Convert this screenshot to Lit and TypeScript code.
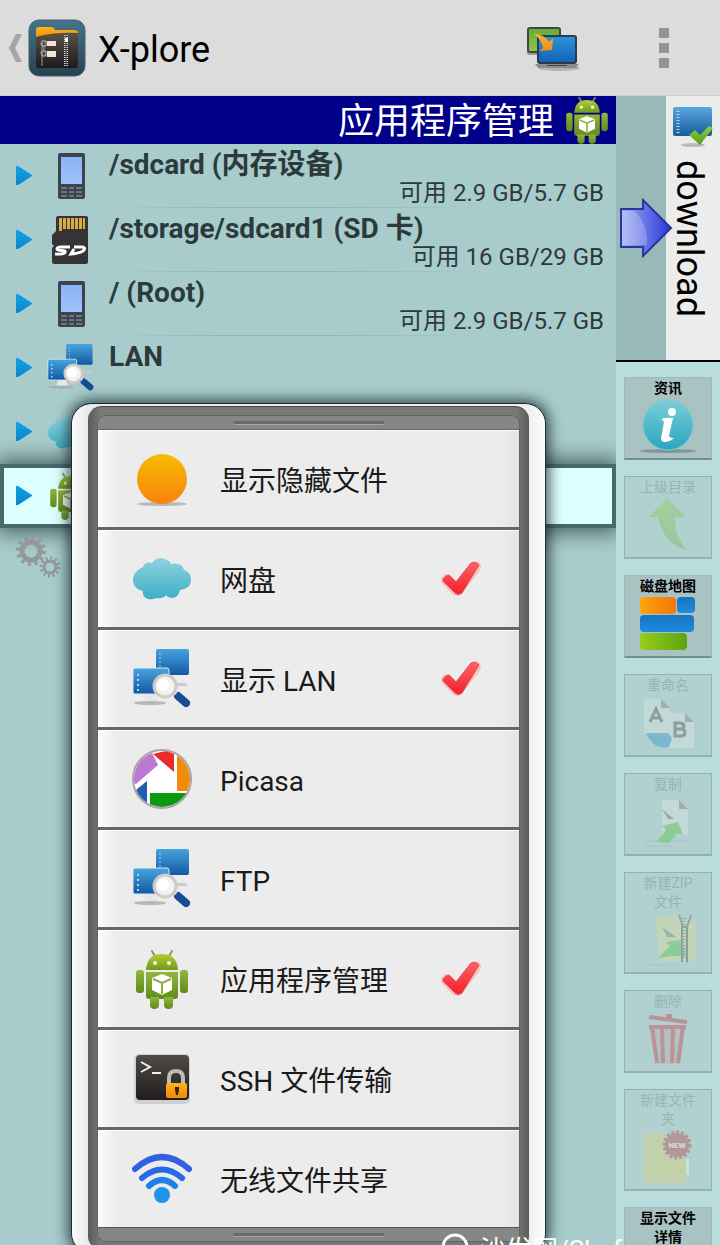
import { LitElement, html, svg, css, nothing } from "lit";
import { customElement, property, state } from "lit/decorators.js";
import { classMap } from "lit/directives/class-map.js";

const grad = (id: string, a: string, b: string, across = false) => svg`
  <linearGradient id=${id} x1="0" y1="0" x2=${across ? 1 : 0} y2=${across ? 0 : 1}>
    <stop offset="0" stop-color=${a}></stop><stop offset="1" stop-color=${b}></stop>
  </linearGradient>`;

const page = (x: number, y: number) => svg`
  <path transform="translate(${x} ${y})" d="M0 0h17l9 9v26H0z" fill="#e4e8ea"></path>
  <path transform="translate(${x} ${y})" d="M17 0v9h9z" fill="#777"></path>`;

const ICONS: Record<string, { box: string; art: unknown }> = {
  app: {
    box: "0 0 58 58",
    art: svg`<defs>${grad("bg", "#44758c", "#27414f")}${grad("fo", "#5b5048", "#1b1b1c")}${grad("or", "#ffb21c", "#f08c00")}</defs>
      <rect x="1" y="1" width="56" height="56" rx="10" fill="url(#bg)" stroke="#4b5f6c"></rect>
      <path d="M8 18v-7q0-3 3-3h12q3 0 4 3h19q4 0 4 3v6H8z" fill="url(#or)"></path>
      <path d="M8 18q18-5 42-4v32q0 3-3 3H11q-3 0-3-3z" fill="url(#fo)"></path>
      <path d="M14 22v25M12 25h6M12 34h6M16 22v14" stroke="#9a9a9a" stroke-width="1" fill="none"></path>
      <path d="M19 22h9v5h-9zM19 32h9v6h-9z" fill="#f3e3d3"></path>
      <path d="M14 22h4v5h-4zM14 32h4v5h-4z" fill="#4a4a4a" stroke="#bbb"></path>
      <path d="M38 16v31" stroke="#d5d5d5" stroke-width="4" stroke-dasharray="1 1"></path>
      <path d="M38 16v31" stroke="#3a3a3a" stroke-width="1"></path><path d="M37 19h3v4h-3z" fill="#fff"></path>`,
  },
  back: { box: "0 0 14 28", art: svg`<path d="M8 0h6L7 14l7 14H8L1 14z" fill="#a5a5a5"></path>` },
  switch: {
    box: "0 0 56 48",
    art: svg`<defs>${grad("g", "#5fae3c", "#9ac24a")}${grad("b", "#2a93dd", "#1462b4")}${grad("o", "#f9b233", "#f28a12")}</defs>
      <ellipse cx="34" cy="44" rx="21" ry="3" fill="#999" opacity=".6"></ellipse>
      <path d="M1 28h14v3H3z" fill="#9a9a9a"></path>
      <rect x="3" y="4" width="32" height="24" rx="2" fill="url(#g)" stroke="#3d473c" stroke-width="2"></rect>
      <rect x="13" y="12" width="38" height="27" rx="2" fill="url(#b)" stroke="#2e3a47" stroke-width="2"></rect>
      <path d="M10 40h44l-3 4H13z" fill="#8c8c8c"></path><path d="M22 41h20v1H22z" fill="#444"></path>
      <path d="M9 10q10 0 15 8l4-4-1 12-13 1 4-3q-1-8-9-14z" fill="url(#o)"></path>`,
  },
  android: {
    box: "0 0 60 60",
    art: svg`<defs>${grad("g", "#b4cf35", "#6f9a1e")}${grad("s", "#94b63a", "#5f8a1c")}</defs>
      <path d="M20 2l4 7M40 2l-4 7" stroke="#8a9a5a" stroke-width="2" stroke-linecap="round"></path>
      <path d="M14 21q1-16 16-16t16 16z" fill="url(#g)"></path>
      <circle cx="23" cy="14" r="2" fill="#f4f8dc"></circle><circle cx="37" cy="14" r="2" fill="#f4f8dc"></circle>
      <path d="M14 23h32v24q0 3-3 3H17q-3 0-3-3z" fill="url(#s)"></path>
      <rect x="4" y="21" width="8" height="23" rx="3" fill="url(#s)"></rect><rect x="48" y="21" width="8" height="23" rx="3" fill="url(#s)"></rect>
      <path d="M18 48h9v9q-1 3-4.500 3T18 57zM32 48h9v9q-1 3-4.500 3T32 57z" fill="url(#s)"></path>
      <path d="M30 25l10 4v12l-10 5-10-5V29z" fill="#fff"></path>
      <path d="M21 30l9 4 9-4M30 34v11" stroke="#8fae3a" stroke-width="2" fill="none"></path>`,
  },
  phone: {
    box: "0 0 48 48",
    art: svg`<defs>${grad("s", "#8db2f2", "#a2c3fa")}</defs>
      <rect x="11" y="1" width="27" height="46" rx="2" fill="#3b444c"></rect><rect x="14" y="5" width="21" height="27" fill="url(#s)"></rect>
      <path d="M14 35h6v2h-6zM22 35h5v2h-5zM29 35h6v2h-6zM14 39h6v2h-6zM22 39h5v2h-5zM29 39h6v2h-6zM14 43h6v2h-6zM22 43h5v2h-5zM29 43h6v2h-6z" fill="#6d757c"></path>`,
  },
  sd: {
    box: "0 0 48 48",
    art: svg`<path d="M11 0h28q2 0 2 2v44q0 2-2 2H7q-2 0-2-2V32l2-2-2-2V19l4-4V2q0-2 2-2z" fill="#343434"></path>
      <path d="M12 2h3v13h-3zM16 2h3v11h-3zM20 2h3v11h-3zM24 2h3v11h-3zM28 2h3v11h-3zM32 2h3v11h-3zM36 2h2v11h-2z" fill="#d9ab45"></path>
      <path d="M23 31H14q-4 0-4 2 0 1.500 5 1.500 4 0 3 2T8 38M27 31h7q5 0 3 3t-13 4l3-5" stroke="#fff" stroke-width="3" fill="none"></path>`,
  },
  lan: {
    box: "0 0 60 60",
    art: svg`<defs>${grad("b", "#48a4dd", "#1457a5")}</defs>
      <ellipse cx="18" cy="54" rx="16" ry="2" fill="#aaa" opacity=".8"></ellipse><path d="M14 45h10l2 7H12z" fill="#e4e6e8"></path>
      <path d="M36 34h16q6 1 2 3H38z" fill="#c9cccf"></path>
      <rect x="24" y="0" width="33" height="26" rx="2" fill="url(#b)"></rect><path d="M28 4v18" stroke="#9fd4ee" stroke-width="1" stroke-dasharray="2 2"></path>
      <rect x="1" y="19" width="36" height="26" rx="2" fill="url(#b)" stroke="#d7ecf5" stroke-width="1"></rect>
      <path d="M6 25v17" stroke="#a4d8f5" stroke-width="2" stroke-dasharray="2 3"></path>
      <path d="M46 47l8 7" stroke="#154b97" stroke-width="8" stroke-linecap="round"></path><path d="M40 41l4 4" stroke="#ddd" stroke-width="4"></path>
      <circle cx="33" cy="37" r="11" fill="#f2f2f2" stroke="#cfcac6" stroke-width="3"></circle><circle cx="31" cy="36" r="6" fill="#fff"></circle>`,
  },
  cloud: {
    box: "0 0 60 60",
    art: svg`<defs>${grad("c", "#8dd4de", "#3fadc6")}</defs>
      <path transform="translate(0 -2)" d="M11 20q2-6 9-4 6-8 15-3 3 1 4 4 11-2 13 6 8 3 7 11t-11 9q-1 7-8 8-4 0-6-3-3 4-10 3-3 2-8 1-6-2-5-8-9-2-10-10-1-9 10-14z" fill="url(#c)"></path>`,
  },
  gears: {
    box: "0 0 48 48",
    art: svg`<g fill="none" stroke="#949899"><circle cx="15" cy="15" r="9" stroke-width="5"></circle><circle cx="15" cy="15" r="13" stroke-width="4" stroke-dasharray="3 3.800"></circle>
      <circle cx="34" cy="31" r="6" stroke-width="3"></circle><circle cx="34" cy="31" r="9" stroke-width="3" stroke-dasharray="2 2.700"></circle></g>`,
  },
  sun: {
    box: "0 0 60 60",
    art: svg`<defs>${grad("o", "#f5bd00", "#f9820e")}</defs><ellipse cx="30" cy="55" rx="25" ry="2" fill="#aaa" opacity=".8"></ellipse><circle cx="30" cy="30" r="25" fill="url(#o)"></circle>`,
  },
  picasa: {
    box: "0 0 60 60",
    art: svg`<defs><clipPath id="k"><circle cx="30" cy="30" r="28"></circle></clipPath></defs>
      <circle cx="30" cy="30" r="29" fill="#fff" stroke="#a9a4a8" stroke-width="2"></circle>
      <g clip-path="url(#k)"><path d="M0 34V0h18l8 16-22 19z" fill="#bd78d2"></path><path d="M21 5L42 0v23z" fill="#ea2b2b"></path>
      <path d="M45 0h15v42H45z" fill="#f08b0c"></path><path d="M18 44h40v16H18z" fill="#0b990f"></path><path d="M15 32v22H0V44z" fill="#1e5fae"></path></g>`,
  },
  ssh: {
    box: "0 0 60 60",
    art: svg`<defs>${grad("k", "#4f4b48", "#201d1c")}${grad("o", "#fdb021", "#f28a05")}</defs>
      <rect x="2" y="5" width="56" height="50" rx="5" fill="#d0d0d3"></rect><rect x="4" y="6" width="53" height="45" rx="4" fill="url(#k)"></rect>
      <path d="M9 13l9 5-9 5M20 24h9" stroke="#eee" stroke-width="2" fill="none"></path>
      <path d="M37 36v-7q0-7 7-7t7 7v7" stroke="#bbb" stroke-width="4" fill="none"></path>
      <rect x="34" y="34" width="21" height="15" rx="2" fill="url(#o)"></rect><path d="M43 38h4v3l-1 5h-2l-1-5z" fill="#3d2503"></path>`,
  },
  wifi: {
    box: "0 0 60 60",
    art: svg`<g fill="none" stroke-width="6" stroke-linecap="round"><path d="M3 20Q30-4 57 20" stroke="#3161e2"></path><path d="M10 29Q30 12 50 29" stroke="#2869e6"></path><path d="M17 37Q30 25 43 37" stroke="#2080ea"></path></g>
      <circle cx="30" cy="46" r="8" fill="#1f92ea"></circle>`,
  },
  tick: {
    box: "0 0 44 40",
    art: svg`<defs>${grad("r", "#ff6464", "#f01f2c")}</defs>
      <path d="M8 21l10 10L36 8" fill="none" stroke="#f8a9a9" stroke-width="12" stroke-linejoin="round" stroke-linecap="round" opacity=".6"></path>
      <path d="M4 20q3-4 6-4l7 7L32 4q5-2 8 2L23 34q-4 3-7 0L4 22z" fill="url(#r)" stroke="#ee4a4f" stroke-width="1" stroke-linejoin="round"></path>`,
  },
  drive: {
    box: "0 0 44 44",
    art: svg`<defs>${grad("b", "#56a8de", "#1b5b9d")}${grad("g", "#8ed03c", "#4d9e1d")}</defs>
      <ellipse cx="22" cy="41" rx="12" ry="2" fill="#bbb"></ellipse><rect x="2" y="3" width="39" height="29" rx="2" fill="url(#b)"></rect>
      <path d="M7 7v23" stroke="#b5dcf5" stroke-width="3" stroke-dasharray="1 2"></path><path d="M18 31l6-5 5 5 9-9 4 2-13 17z" fill="url(#g)"></path>`,
  },
  arrow: {
    box: "0 0 54 60",
    art: svg`<defs>${grad("b", "#9fb0f4", "#2b34d8", true)}</defs><path d="M2 11h22V2l28 28-28 28V49H2z" fill="url(#b)" stroke="#28379f" stroke-width="2"></path>
      <path d="M3 13h12q14 12 13 34H3z" fill="#fff" opacity=".22"></path>`,
  },
  info: {
    box: "0 0 56 56",
    art: svg`<defs>${grad("c", "#79ced8", "#2ba5bd")}</defs><ellipse cx="28" cy="53" rx="28" ry="2" fill="#7a8a8a" opacity=".8"></ellipse>
      <circle cx="28" cy="27" r="25" fill="url(#c)" stroke="#7cc9d4"></circle><circle cx="32" cy="14" r="4" fill="#fff"></circle>
      <path d="M21 21q6-2 12-1l-4 18q1 2 5 2-4 4-10 4-3-1-3-4l3-16q-1-2-3-3z" fill="#fff"></path>`,
  },
  up: { box: "0 0 56 56", art: svg`<defs>${grad("g", "#8bd040", "#6fb050")}</defs><path d="M27 1l19 19H35q-1 20 12 33-24-6-29-33H9z" fill="url(#g)"></path>` },
  map: {
    box: "0 0 56 56",
    art: svg`<defs>${grad("o", "#fca60c", "#f2760a", true)}${grad("b", "#1673bf", "#1f8be0")}${grad("g", "#9acc1c", "#5ba510", true)}</defs>
      <rect x="0" y="1" width="36" height="17" rx="4" fill="url(#o)"></rect><rect x="37" y="1" width="18" height="16" rx="4" fill="url(#b)"></rect>
      <rect x="0" y="19" width="54" height="17" rx="4" fill="url(#b)"></rect><rect x="0" y="37" width="47" height="17" rx="4" fill="url(#g)"></rect>`,
  },
  rename: {
    box: "0 0 56 56",
    art: svg`${page(4, 4)}${page(28, 18)}<path d="M6 38h22l4 5-3 9q-16 3-23-14z" fill="#1e86dc"></path>
      <path d="M10 27l6-13 6 13M12 23h8M35 28v13h6q4 0 4-3.500T41 34h-6 5q4 0 4-3t-4-3z" fill="none" stroke="#444" stroke-width="3"></path>`,
  },
  copy: { box: "0 0 56 56", art: svg`${page(22, 6)}<path d="M4 52h30M4 47h46" stroke="#aaa"></path><path d="M22 15l12 10h-6z" fill="#666"></path><path d="M16 48l10-12-4-4 16-4 5 13-6-1-8 9z" fill="#4fc530"></path>` },
  zip: {
    box: "0 0 56 56",
    art: svg`<path d="M16 4h20l6 5h14v40H20z" fill="#e6dd92"></path><path d="M22 15l14 10h-9z" fill="#777"></path><path d="M18 46l12-12-4-4 16-2 4 16H32z" fill="#4fc530"></path>
      <path d="M42 14v36M47 14v36" stroke="#444" stroke-width="2"></path><path d="M44 6v42" stroke="#666" stroke-width="4" stroke-dasharray="1 2"></path><path d="M39 3l4 12h4l4-12" stroke="#555" stroke-width="2" fill="none"></path><path d="M4 53h34" stroke="#aaa"></path>`,
  },
  trash: {
    box: "0 0 56 56",
    art: svg`<path d="M9 6l38 5M26 5h6" stroke="#d02030" stroke-width="4"></path><path d="M9 16h36l-5 37H16z" fill="#b9a8a4"></path>
      <path d="M12 16l5 36M22 16l1 36M33 16l-1 36M43 16l-5 36M9 16h37" stroke="#d32233" stroke-width="4" fill="none"></path>`,
  },
  folder: {
    box: "0 0 56 56",
    art: svg`<path d="M4 4h20l4 4h18v46H8q-4 0-4-4z" fill="#e8d26a"></path><path d="M46 30h3v16h-3z" fill="#fff"></path>
      <circle cx="37" cy="16" r="12" fill="#c02a35"></circle><circle cx="37" cy="16" r="13" fill="none" stroke="#c02a35" stroke-width="3" stroke-dasharray="3 2"></circle>
      <text x="37" y="19" font-size="8" font-weight="700" text-anchor="middle" fill="#fff">NEW</text>`,
  },
  details: { box: "0 0 56 56", art: page(14, 8) },
  dots: { box: "0 0 12 42", art: svg`<path d="M1 1h10v10H1zM1 16h10v10H1zM1 31h10v10H1z" fill="#949494"></path>` },
  expand: { box: "0 0 17 20", art: svg`<defs>${grad("b", "#12a0e6", "#0b86cc")}</defs><path d="M0 0h2l14 9v1L2 19H0z" fill="url(#b)"></path>` },
  ring: { box: "0 0 30 30", art: svg`<circle cx="15" cy="15" r="12" fill="none" stroke="#fff" stroke-width="3"></circle>` },
};

@customElement("xp-icon")
class XpIcon extends LitElement {
  @property() name = "";
  static styles = css`
    :host { display: block; flex: none; }
    svg { display: block; width: 100%; height: 100%; font-family: Roboto, sans-serif; }
  `;
  render() {
    const icon = ICONS[this.name];
    return icon ? html`<svg viewBox=${icon.box} aria-hidden="true">${icon.art}</svg>` : nothing;
  }
}

interface Place { icon: string; name: string; free?: string; selected?: boolean; leaf?: boolean }
interface Option { icon: string; name: string; on?: boolean }
interface Tool { icon: string; name: string; off?: boolean }

const PLACES: Place[] = [
  { icon: "phone", name: "/sdcard (内存设备)", free: "可用 2.9 GB/5.7 GB" },
  { icon: "sd", name: "/storage/sdcard1 (SD 卡)", free: "可用 16 GB/29 GB" },
  { icon: "phone", name: "/ (Root)", free: "可用 2.9 GB/5.7 GB" },
  { icon: "lan", name: "LAN" },
  { icon: "cloud", name: "" },
  { icon: "android", name: "", selected: true },
  { icon: "gears", name: "", leaf: true },
];

const TOOLS: Tool[] = [
  { icon: "info", name: "资讯" },
  { icon: "up", name: "上级目录", off: true },
  { icon: "map", name: "磁盘地图" },
  { icon: "rename", name: "重命名", off: true },
  { icon: "copy", name: "复制", off: true },
  { icon: "zip", name: "新建ZIP文件", off: true },
  { icon: "trash", name: "删除", off: true },
  { icon: "folder", name: "新建文件夹", off: true },
  { icon: "details", name: "显示文件详情" },
];

@customElement("app-root")
class AppRoot extends LitElement {
  @state() options: Option[] = [
    { icon: "sun", name: "显示隐藏文件" },
    { icon: "cloud", name: "网盘", on: true },
    { icon: "lan", name: "显示 LAN", on: true },
    { icon: "picasa", name: "Picasa" },
    { icon: "lan", name: "FTP" },
    { icon: "android", name: "应用程序管理", on: true },
    { icon: "ssh", name: "SSH 文件传输" },
    { icon: "wifi", name: "无线文件共享" },
  ];

  static styles = css`
    :host {
      display: flex; flex-direction: column; position: relative; height: 100vh; overflow: hidden;
      background: #a8cccc; color: #000;
      font-family: Roboto, "Noto Sans CJK SC", sans-serif;
    }
    * { box-sizing: border-box; }
    button { font: inherit; color: inherit; border: 0; padding: 0; margin: 0; background: none; text-align: left; }
    h1, h2, ul { margin: 0; padding: 0; font-weight: 400; list-style: none; }

    .bar { display: flex; align-items: center; flex: none; height: 96px; padding: 0 50px 0 8px; background: #dcdcdc; border-bottom: 1px solid #d0d0d0; }
    .home { display: flex; align-items: center; gap: 6px; }
    .back { width: 14px; height: 28px; }
    .logo { width: 58px; height: 58px; }
    .bar h1 { flex: 1; padding: 4px 0 0 12px; font-size: 36px; line-height: 48px; }
    .switch { width: 56px; height: 48px; margin-right: 77px; }
    .dots { width: 12px; height: 42px; }

    .main { display: flex; flex: 1; min-height: 0; }
    .pane { flex: 1; min-width: 0; overflow: hidden; }
    .pane-title { display: flex; justify-content: flex-end; align-items: center; gap: 9px; height: 48px; padding-right: 5px; background: #000089; color: #fff; font-size: 36px; line-height: 48px; }
    .pane-title span { padding-top: 4px; }
    .pane-title xp-icon { width: 48px; height: 48px; }

    .row { position: relative; display: flex; align-items: center; gap: 14px; height: 64px; padding: 0 12px 0 16px; color: #2c3a3c; }
    .row.lined { background: linear-gradient(90deg, transparent 110px, #93b5b5 220px, #93b5b5 330px, transparent 480px) bottom / 100% 1px no-repeat; }
    .row.selected { background: #dcffff; border: 4px solid #47696a; padding-left: 12px; box-shadow: 0 0 20px 4px #405a5a; }
    .expand { width: 17px; height: 20px; }
    .expand xp-icon { width: 17px; height: 20px; }
    .place { width: 48px; height: 48px; }
    .text { flex: 1; align-self: flex-start; display: flex; flex-direction: column; padding-top: 5px; }
    .name { font-size: 28px; line-height: 32px; font-weight: 700; }
    .free { font-size: 24px; line-height: 24px; align-self: flex-end; }
    .gears { width: 48px; height: 48px; }

    .side { flex: none; width: 104px; display: flex; flex-direction: column; background: #b9dddd; }
    .other { display: flex; flex: none; height: 266px; background: #97b9b9; border-bottom: 2px solid #000; }
    .swap { position: relative; width: 50px; display: flex; align-items: center; padding-left: 3px; z-index: 1; }
    .swap xp-icon { width: 54px; height: 60px; }
    .tab { flex: 1; display: flex; flex-direction: column; align-items: center; gap: 12px; padding-top: 8px; background: #ececec; font-size: 36px; line-height: 44px; }
    .tab xp-icon { width: 44px; height: 44px; }
    .tab span { writing-mode: vertical-rl; padding-right: 8px; }
    .tools { display: flex; flex-direction: column; gap: 16px; padding: 15px 8px 0; }
    .tool { display: flex; flex-direction: column; align-items: center; flex: none; padding: 1px 12px 4px; background: #a9c2c2; border: 1px solid #a0b9b9; border-bottom: 2px solid #748f8f; font-size: 14px; line-height: 19px; font-weight: 700; text-align: center; }
    .tool xp-icon { width: 56px; height: 56px; }
    .tool:disabled { opacity: 1; background: #b0d1cf; border: 1px solid #94b0b0; border-bottom-width: 2px; color: #98b3b2; font-weight: 400; }
    .tool:disabled xp-icon { opacity: .35; }

    .menu { position: absolute; top: 404px; left: 10%; right: 24.300%; padding: 2px 16px 3px; background: linear-gradient(90deg, #fbfbfb, #e8e8e8 16px, #f0f0f0 calc(100% - 16px), #fdfdfd); border-radius: 20px; box-shadow: 0 0 0 1px #1d2b2d, 0 0 14px 4px rgba(10, 25, 30, .75); }
    .bezel { padding: 9px 10px; background: linear-gradient(90deg, #5a5a5a, #787878 12px, #787878 calc(100% - 12px), #5a5a5a); border-top: 1px solid #4d4848; border-radius: 14px; }
    .screen { border-radius: 8px; overflow: hidden; background: #808080; box-shadow: 0 0 0 1px #626262; }
    .slot { display: flex; align-items: center; justify-content: center; height: 13px; background: #868686; }
    .slot span { width: 152px; height: 4px; border-radius: 2px; background: #6a6a6a; border-bottom: 1px solid #a5a5a5; }
    .menu li { border-top: 3px solid #666; }
    .menu li:first-child { border-top-width: 1px; }
    .menu ul { border-bottom: 1px solid #555; }
    .option { display: flex; align-items: center; width: 100%; height: 97px; gap: 28px; padding: 0 36px 0 34px; background: linear-gradient(90deg, #fdfdfd, #ececec 18px, #ececec calc(100% - 18px), #e2e2e2); border-top: 1px solid #fff; color: #1a1a1a; font-size: 28px; line-height: 36px; }
    .option > xp-icon { width: 60px; height: 60px; }
    .option span { flex: 1; padding-top: 6px; }
    .option .tick { width: 44px; height: 40px; }

    .mark { position: absolute; bottom: 0; right: 26px; display: flex; align-items: flex-start; gap: 10px; height: 13px; overflow: hidden; color: #fff; font-size: 26px; line-height: 32px; }
    .mark xp-icon { width: 30px; height: 30px; }
    .mark span { padding-top: 2px; }
  `;

  private toggle(i: number) {
    this.options = this.options.map((o, n) => (n === i ? { ...o, on: !o.on } : o));
  }

  render() {
    return html`
      <header class="bar">
        <button class="home" aria-label="返回"><xp-icon class="back" name="back"></xp-icon><xp-icon class="logo" name="app"></xp-icon></button>
        <h1>X-plore</h1>
        <button aria-label="切换"><xp-icon class="switch" name="switch"></xp-icon></button>
        <button aria-label="更多"><xp-icon class="dots" name="dots"></xp-icon></button>
      </header>
      <div class="main">
        <section class="pane">
          <h2 class="pane-title"><span>应用程序管理</span><xp-icon name="android"></xp-icon></h2>
          <ul>${PLACES.map((p) => this.place(p))}</ul>
        </section>
        <aside class="side">
          <div class="other">
            <button class="swap" aria-label="切换窗格"><xp-icon name="arrow"></xp-icon></button>
            <div class="tab"><xp-icon name="drive"></xp-icon><span>download</span></div>
          </div>
          <div class="tools">
            ${TOOLS.map((t) => html`<button class="tool" ?disabled=${t.off}>${t.name}<xp-icon name=${t.icon}></xp-icon></button>`)}
          </div>
        </aside>
      </div>
      <div class="menu">
        <div class="bezel">
          <div class="screen">
            <div class="slot"><span></span></div>
            <ul role="menu">
              ${this.options.map((o, i) => html`<li role="none">
                <button class="option" role="menuitemcheckbox" aria-checked=${o.on ? "true" : "false"} @click=${() => this.toggle(i)}>
                  <xp-icon name=${o.icon}></xp-icon><span>${o.name}</span>${o.on ? html`<xp-icon class="tick" name="tick"></xp-icon>` : nothing}
                </button>
              </li>`)}
            </ul>
            <div class="slot"><span></span></div>
          </div>
        </div>
      </div>
      <div class="mark"><xp-icon name="ring"></xp-icon><span>沙发网/Shafa.com</span></div>
    `;
  }

  private place(p: Place) {
    if (p.leaf) return html`<li class="row"><xp-icon class="gears" name=${p.icon}></xp-icon></li>`;
    return html`<li class=${classMap({ row: true, lined: !!p.free, selected: !!p.selected })}>
      <button class="expand" aria-label="展开"><xp-icon name="expand"></xp-icon></button>
      <xp-icon class="place" name=${p.icon}></xp-icon>
      <div class="text"><span class="name">${p.name}</span>${p.free ? html`<span class="free">${p.free}</span>` : nothing}</div>
    </li>`;
  }
}
